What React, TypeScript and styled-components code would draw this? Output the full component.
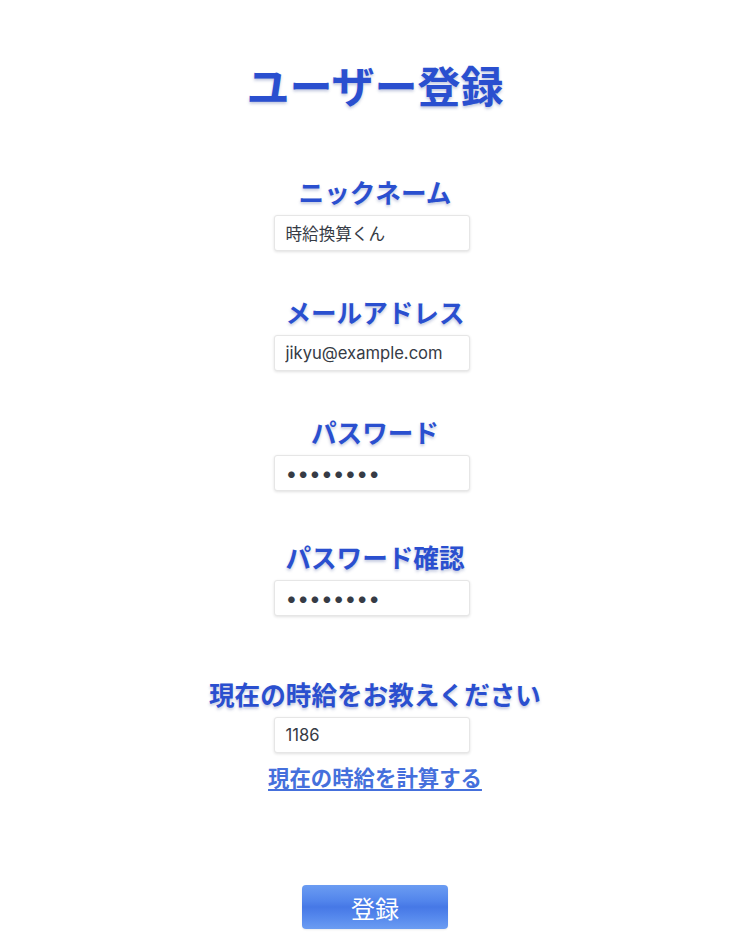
import React from "react";
import styled, { createGlobalStyle } from "styled-components";

const GlobalStyle = createGlobalStyle`
  html, body {
    margin: 0;
    padding: 0;
    background: #ffffff;
  }
  body {
    font-family: "Inter", "Noto Sans CJK JP", sans-serif;
  }
`;

const Page = styled.main`
  width: 750px;
  min-height: 941px;
  display: flex;
  flex-direction: column;
  align-items: center;
  padding-top: 59px;
  box-sizing: border-box;
`;

const Title = styled.h1`
  margin: 0 0 68px;
  font-family: "Noto Sans CJK JP", sans-serif;
  font-size: 43px;
  line-height: 50px;
  font-weight: 700;
  color: #2a4fcf;
  text-shadow: 0 2px 3px rgba(40, 60, 140, 0.28);
`;

const Form = styled.form`
  display: flex;
  flex-direction: column;
  align-items: center;
`;

const Field = styled.div<{ $gap: number }>`
  display: flex;
  flex-direction: column;
  align-items: center;
  margin-top: ${(p) => p.$gap}px;
`;

const Label = styled.label`
  font-family: "Noto Sans CJK JP", sans-serif;
  font-size: 25.6px;
  line-height: 30px;
  font-weight: 700;
  color: #2a4fcf;
  text-shadow: 0 2px 3px rgba(40, 60, 140, 0.28);
  margin-bottom: 8px;
`;

const Input = styled.input<{ $secret?: boolean }>`
  width: 196px;
  height: 36px;
  margin-right: 5px;
  box-sizing: border-box;
  padding: 0 10px;
  border: 1px solid #e6e6e6;
  border-radius: 3px;
  box-shadow: 0 1px 3px rgba(0, 0, 0, 0.12);
  background: #fff;
  font-family: "Inter", "Noto Sans CJK JP", sans-serif;
  font-size: ${(p) => (p.$secret ? "21px" : "16.6px")};
  color: #363b45;
  outline: none;
`;

const CalcLink = styled.a`
  margin-top: 11px;
  font-family: "Noto Sans CJK JP", sans-serif;
  font-size: 21.4px;
  line-height: 26px;
  font-weight: 700;
  color: #4570dc;
  text-decoration: underline;
  text-underline-offset: 3px;
  text-decoration-thickness: 2px;
  cursor: pointer;
`;

const SubmitButton = styled.button`
  margin-top: 95px;
  width: 146px;
  height: 44px;
  border: none;
  border-radius: 4px;
  background: linear-gradient(
    to bottom,
    #6b9cf2 0%,
    #5386ec 35%,
    #4678e6 50%,
    #5386ec 70%,
    #6b9cf2 100%
  );
  color: #ffffff;
  font-family: "Noto Sans CJK JP", sans-serif;
  font-size: 24px;
  font-weight: 400;
  cursor: pointer;
  box-shadow: 0 1px 2px rgba(0, 0, 0, 0.08);
`;

type FieldDef = {
  id: string;
  label: string;
  type: string;
  value: string;
  gap: number;
};

const fields: FieldDef[] = [
  { id: "nickname", label: "ニックネーム", type: "text", value: "時給換算くん", gap: 0 },
  { id: "email", label: "メールアドレス", type: "email", value: "jikyu@example.com", gap: 46 },
  { id: "password", label: "パスワード", type: "password", value: "password", gap: 46 },
  { id: "confirm", label: "パスワード確認", type: "password", value: "password", gap: 51 },
  { id: "wage", label: "現在の時給をお教えください", type: "text", value: "1186", gap: 63 },
];

export default function App() {
  return (
    <>
      <GlobalStyle />
      <Page>
        <Title>ユーザー登録</Title>
        <Form onSubmit={(e) => e.preventDefault()}>
          {fields.map((f) => (
            <Field key={f.id} $gap={f.gap}>
              <Label htmlFor={f.id}>{f.label}</Label>
              <Input
                id={f.id}
                type={f.type}
                defaultValue={f.value}
                $secret={f.type === "password"}
                readOnly
              />
            </Field>
          ))}
          <CalcLink>現在の時給を計算する</CalcLink>
          <SubmitButton type="submit">登録</SubmitButton>
        </Form>
      </Page>
    </>
  );
}
